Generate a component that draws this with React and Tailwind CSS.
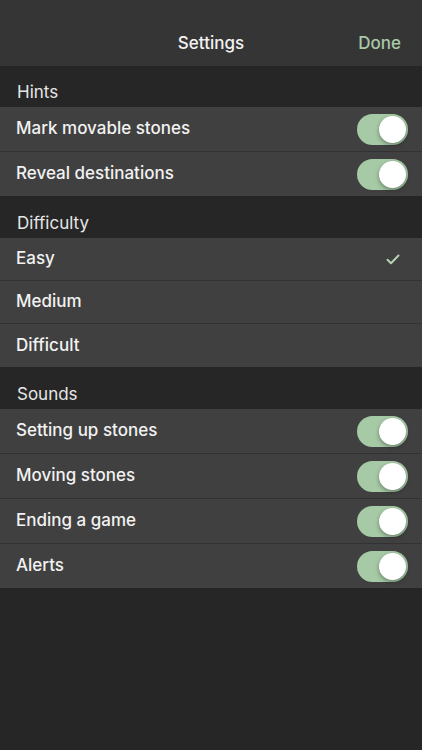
import React from 'react';

const Toggle = () => (
    <div className="w-[51px] h-[31px] rounded-full bg-[#a6c9a6] relative shrink-0">
        <div className="absolute right-[2px] top-[2px] w-[27px] h-[27px] rounded-full bg-white shadow-[0_2px_4px_rgba(0,0,0,0.35)]" />
    </div>
);

const Check = () => (
    <svg width="14" height="11" viewBox="0 0 14 11" fill="none">
        <path d="M1.5 5.8 L5 9.2 L12.5 1.5" stroke="#b3d2b3" strokeWidth="2" strokeLinecap="round" strokeLinejoin="round" />
    </svg>
);

const Header = ({ title, tall }) => (
    <div className={`${tall ? 'h-[42px]' : 'h-[41px]'} flex items-end px-[17px] pb-[2px] bg-[#262626] text-[17px] text-[#e6e6e6]`}>
        {title}
    </div>
);

const Row = ({ label, right, last, short }) => {
    const h = short ? (last ? 'h-[43px]' : 'h-[43px] border-b border-[#323232]') : (last ? 'h-[44px]' : 'h-[45px] border-b border-[#323232]');
    return (
        <div className={`${h} flex items-center justify-between pl-[16px] pr-[14px] bg-[#404040]`}>
            <span className="text-[17px] font-medium text-[#f2f2f2]">{label}</span>
            {right}
        </div>
    );
};

const App = () => {
    const hints = ['Mark movable stones', 'Reveal destinations'];
    const levels = ['Easy', 'Medium', 'Difficult'];
    const sounds = ['Setting up stones', 'Moving stones', 'Ending a game', 'Alerts'];

    return (
        <div className="w-[422px] h-[750px] bg-[#262626] flex flex-col" style={{ fontFamily: 'Inter, "Noto Sans", sans-serif' }}>
            <div className="h-[66px] shrink-0 bg-[#353535] flex items-end pb-[10px] relative">
                <div className="flex-1 text-center text-[17px] font-medium text-[#f2f2f2]">Settings</div>
                <div className="absolute right-[21px] bottom-[10px] text-[17px] font-medium text-[#a9c8a9]">Done</div>
            </div>

            <Header title="Hints" />
            {hints.map((h, i) => (
                <Row key={h} label={h} right={<Toggle />} last={i === hints.length - 1} />
            ))}

            <Header title="Difficulty" tall />
            {levels.map((l, i) => (
                <Row
                    key={l}
                    short
                    label={l}
                    right={l === 'Easy' ? <div className="pr-[8px]"><Check /></div> : null}
                    last={i === levels.length - 1}
                />
            ))}

            <Header title="Sounds" tall />
            {sounds.map((s, i) => (
                <Row key={s} label={s} right={<Toggle />} last={i === sounds.length - 1} />
            ))}
        </div>
    );
};

export default App;
